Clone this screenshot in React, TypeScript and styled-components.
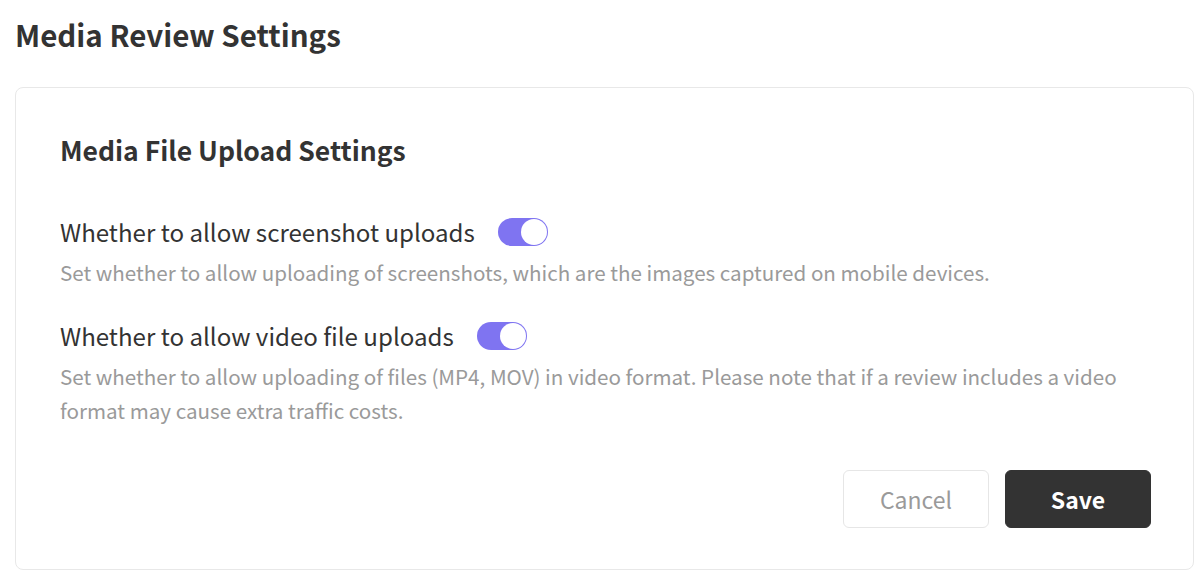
import React, { useState } from "react";
import styled, { createGlobalStyle } from "styled-components";

const GlobalStyle = createGlobalStyle`
  html, body {
    margin: 0;
    padding: 0;
    background: #ffffff;
  }
  body {
    font-family: "Noto Sans CJK KR", "Noto Sans", sans-serif;
    color: #333333;
  }
`;

const Page = styled.div`
  width: 1204px;
  padding: 12px 10px 14px 15px;
  box-sizing: border-box;
`;

const PageTitle = styled.h1`
  margin: 0 0 31px;
  font-size: 29.5px;
  font-weight: 700;
  line-height: 44px;
  color: #333333;
`;

const Card = styled.section`
  border: 1.5px solid #e8e8e8;
  border-radius: 8px;
  padding: 44px 42px 41px 44px;
  background: #ffffff;
`;

const CardTitle = styled.h2`
  margin: 0 0 47px;
  font-size: 26.5px;
  font-weight: 700;
  line-height: 36px;
  color: #333333;
`;

const Option = styled.div`
  & + & {
    margin-top: 30px;
  }
`;

const OptionHead = styled.div`
  display: flex;
  align-items: center;
  gap: 23px;
`;

const OptionLabel = styled.span`
  font-size: 24.1px;
  line-height: 34px;
  color: #333333;
`;

const OptionDesc = styled.p`
  margin: 6px 0 0;
  font-size: 20.6px;
  line-height: 34px;
  color: #9a9a9a;
`;

const Switch = styled.button<{ $on: boolean }>`
  position: relative;
  width: 50px;
  height: 28px;
  border: none;
  border-radius: 14px;
  padding: 0;
  cursor: pointer;
  background: ${(p) => (p.$on ? "#7f74f1" : "#d6d6d6")};

  &::after {
    content: "";
    position: absolute;
    top: 1px;
    left: ${(p) => (p.$on ? "23px" : "1px")};
    width: 26px;
    height: 26px;
    border-radius: 50%;
    background: #ffffff;
  }
`;

const Actions = styled.div`
  display: flex;
  justify-content: flex-end;
  gap: 16px;
  margin-top: 43px;
`;

const Button = styled.button<{ $primary?: boolean }>`
  width: 146px;
  height: 58px;
  border-radius: 6px;
  font-family: inherit;
  font-size: 23px;
  font-weight: ${(p) => (p.$primary ? 700 : 400)};
  cursor: pointer;
  border: 1.5px solid ${(p) => (p.$primary ? "#333333" : "#e6e6e6")};
  background: ${(p) => (p.$primary ? "#333333" : "#ffffff")};
  color: ${(p) => (p.$primary ? "#ffffff" : "#9a9a9a")};
`;

const App = () => {
  const [screenshots, setScreenshots] = useState(true);
  const [videos, setVideos] = useState(true);

  return (
    <Page>
      <GlobalStyle />
      <PageTitle>Media Review Settings</PageTitle>
      <Card>
        <CardTitle>Media File Upload Settings</CardTitle>

        <Option>
          <OptionHead>
            <OptionLabel>Whether to allow screenshot uploads</OptionLabel>
            <Switch $on={screenshots} onClick={() => setScreenshots(!screenshots)} />
          </OptionHead>
          <OptionDesc>
            Set whether to allow uploading of screenshots, which are the images captured on mobile devices.
          </OptionDesc>
        </Option>

        <Option>
          <OptionHead>
            <OptionLabel>Whether to allow video file uploads</OptionLabel>
            <Switch $on={videos} onClick={() => setVideos(!videos)} />
          </OptionHead>
          <OptionDesc>
            Set whether to allow uploading of files (MP4, MOV) in video format. Please note that if a review includes a video
            format may cause extra traffic costs.
          </OptionDesc>
        </Option>

        <Actions>
          <Button>Cancel</Button>
          <Button $primary>Save</Button>
        </Actions>
      </Card>
    </Page>
  );
};

export default App;
